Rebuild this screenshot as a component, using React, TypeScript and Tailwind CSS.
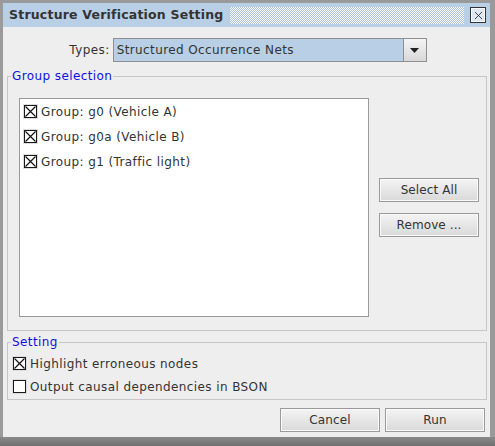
import { X } from 'lucide-react';

const font = { fontFamily: '"DejaVu Sans", Verdana, sans-serif' };

function Check({ checked }: { checked: boolean }) {
  return (
    <span className="w-[13px] h-[13px] flex-shrink-0 border border-[#1a1a1a] bg-white flex items-center justify-center shadow-[0_0_0_1px_#dcdcdc]">
      {checked && (
        <svg width="11" height="11" viewBox="0 0 11 11">
          <path d="M0.5 0.5 L10.5 10.5 M10.5 0.5 L0.5 10.5" stroke="#111" strokeWidth="1.2" />
        </svg>
      )}
    </span>
  );
}

function Btn({ label, className = '' }: { label: string; className?: string }) {
  return (
    <button className={`h-[24px] w-[100px] border border-[#9a9a9a] bg-gradient-to-b from-[#f4f4f4] to-[#d9d9d9] text-[12px] tracking-[0.1px] text-[#333] shadow-[inset_0_0_0_1px_#fafafa] ${className}`}>
      {label}
    </button>
  );
}

const groups = ['Group: g0 (Vehicle A)', 'Group: g0a (Vehicle B)', 'Group: g1 (Traffic light)'];

export default function App() {
  return (
    <div className="w-[495px] h-[446px] bg-[#9a9a9a] flex flex-col tracking-[0.4px]" style={font}>
      <div className="flex-1 pl-[3px] pt-[3px] pr-[5px] flex">
        <div className="flex-1 flex flex-col bg-[#eeeeee]">
          {/* title bar */}
          <div className="h-[24px] bg-[#b8cfe5] flex items-center pl-[6px] pr-[4px]">
            <span className="text-[12.5px] font-bold tracking-[0.2px] text-[#333] whitespace-nowrap">Structure Verification Setting</span>
            <div className="flex-1 h-[17px] ml-[7px] mr-[6px] bg-[repeating-conic-gradient(#ffffff_0_25%,#a9c2dc_0_50%)] bg-[length:2px_2px]" />
            <div className="w-[16px] h-[16px] border border-[#333] bg-[#dfe8f2] flex items-center justify-center shadow-[inset_0_0_0_1px_#fff]">
              <X size={13} strokeWidth={1.5} className="text-[#222]" />
            </div>
          </div>

          {/* types */}
          <div className="mt-[11px] flex items-center justify-center gap-[3px] pl-[3px]">
            <span className="text-[12px] text-[#333]">Types:</span>
            <div className="w-[314px] h-[24px] border border-[#8f8f8f] bg-[#b8cfe5] flex">
              <span className="flex-1 pl-[3px] text-[12px] text-[#333] leading-[22px]">Structured Occurrence Nets</span>
              <div className="w-[23px] border-l border-[#8f8f8f] bg-gradient-to-b from-[#f4f4f4] to-[#d8d8d8] flex items-center justify-center">
                <svg width="9" height="5" viewBox="0 0 9 5"><path d="M0 0 H9 L4.5 5 Z" fill="#222" /></svg>
              </div>
            </div>
          </div>

          {/* group selection */}
          <fieldset className="mt-[7px] ml-[4px] mr-[3px] border border-[#c6c6c6] pl-[11px] pr-[7px] pt-[15px] pb-[13px]">
            <legend className="ml-[-8px] px-[1px] text-[12px] leading-[14px] text-[#1010e0]">Group selection</legend>
            <div className="flex items-center gap-[10px]">
              <div className="w-[350px] h-[219px] border border-[#9a9a9a] bg-white pl-[4px]">
                {groups.map(g => (
                  <div key={g} className="h-[25px] flex items-center gap-[4px] text-[12px] text-[#333]">
                    <Check checked />
                    <span>{g}</span>
                  </div>
                ))}
              </div>
              <div className="flex flex-col gap-[11px]">
                <Btn label="Select All" />
                <Btn label="Remove ..." />
              </div>
            </div>
          </fieldset>

          {/* setting */}
          <fieldset className="mt-[4px] ml-[4px] mr-[3px] border border-[#c6c6c6] pl-[5px] pt-[3px] pb-[1px]">
            <legend className="ml-[-2px] px-[1px] text-[12px] leading-[14px] text-[#1010e0]">Setting</legend>
            <div className="h-[23px] flex items-center gap-[4px] text-[12px] text-[#333]">
              <Check checked />
              <span>Highlight erroneous nodes</span>
            </div>
            <div className="h-[23px] flex items-center gap-[4px] text-[12px] text-[#333]">
              <Check checked={false} />
              <span>Output causal dependencies in BSON</span>
            </div>
          </fieldset>

          {/* footer */}
          <div className="mt-[8px] flex justify-end gap-[5px] pr-[5px]">
            <Btn label="Cancel" />
            <Btn label="Run" />
          </div>
        </div>
      </div>
      <div className="h-[9px] bg-gradient-to-b from-[#8a8a8a] to-[#6f6f6f]" />
    </div>
  );
}
